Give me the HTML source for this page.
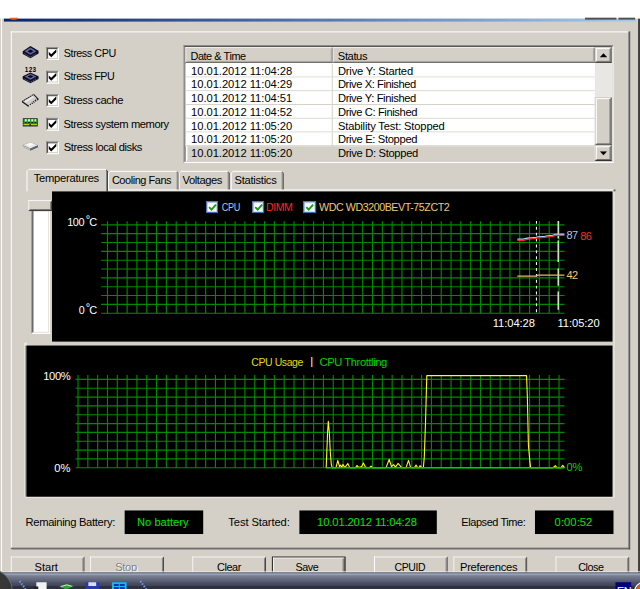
<!DOCTYPE html>
<html><head><meta charset="utf-8"><title>System Stability Test</title>
<style>
html,body{margin:0;padding:0;background:#fff;}
body{width:640px;height:589px;overflow:hidden;position:relative;}
#w{position:absolute;left:0;top:0;width:652px;height:600px;transform:scale(0.98160,0.98167);transform-origin:0 0;background:#d4d0c8;font:11.4px "Liberation Sans",sans-serif;color:#000;overflow:hidden;}
#w div,#w span,#w svg{position:absolute;box-sizing:border-box;}
.t{white-space:nowrap;line-height:13px;height:13px;}
.cb{width:13px;height:13px;background:#fff;border:1px solid;border-color:#808080 #fff #fff #808080;}
.cb i{position:absolute;left:0;top:0;width:11px;height:11px;border:1px solid;border-color:#404040 #d4d0c8 #d4d0c8 #404040;box-sizing:border-box;}
.btn{height:23px;width:75px;background:#d4d0c8;border:1px solid;border-color:#fff #404040 #404040 #fff;text-align:center;}
.btn i{position:absolute;left:0;top:0;right:0;bottom:0;border:1px solid;border-color:#d4d0c8 #808080 #808080 #d4d0c8;}
.btn b{position:absolute;left:0;right:0;top:3px;font-weight:normal;font-style:normal;line-height:13px;}
.blk{background:#000;color:#00e000;text-align:center;line-height:23px;height:23px;}
</style></head><body>
<div id="w">
<!-- frame -->
<div style="left:0;top:0;width:652px;height:18.700px;background:#fff"></div>
<div style="left:4px;top:18.600px;width:644px;height:3.400px;background:linear-gradient(90deg,#0a246a,#a6caf0)"></div>
<div style="left:596px;top:18.3px;width:32px;height:1.6px;background:#505050"></div>
<div style="left:630px;top:18.3px;width:16.500px;height:1.6px;background:#505050"></div>
<div style="left:10px;top:17.500px;width:8px;height:2.500px;border-radius:0 0 4px 4px;background:#e86020"></div>
<div style="left:1px;top:19px;width:1px;height:581px;background:#fff"></div>
<div style="left:649.9px;top:19px;width:3px;height:581px;background:#404040"></div>
<!-- group box -->
<div style="left:11px;top:32px;width:630px;height:1px;background:#fff"></div>
<div style="left:11px;top:32px;width:1px;height:527px;background:#fff"></div>
<div style="left:639.5px;top:32px;width:1px;height:527px;background:#808080"></div>
<div style="left:640.5px;top:32px;width:1px;height:528px;background:#404040"></div>
<div style="left:11px;top:558px;width:630px;height:1px;background:#404040"></div>
<div style="left:12px;top:559px;width:629px;height:1px;background:#909090"></div>
<!--SECTION:checks-->
<div style="left:23px;top:46px;width:16px;height:16px"><svg width="18" height="16" viewBox="0 0 18 16"><path d="M-0.300 6.400L8 0.800l8.300 5v2.700L8 13.300-0.300 8.700z" fill="#0e0e22"/><path d="M2 6.300L8 2.500l6 3.600L8 9.800z" fill="#6068a6"/><path d="M5 6.200L8 4.400l3 1.700L8 7.900z" fill="#07070f"/><path d="M2 8.600L8 12.200l6-3.800" stroke="#6a72ac" stroke-width="1" stroke-dasharray="1.200 1.200" fill="none"/></svg></div>
<div class="cb" style="left:47px;top:48px"><i></i><svg style="left:1px;top:1px" width="9" height="9" viewBox="0 0 9 9"><path d="M0.700 2.800v3l2.500 2.500 5.200-5.200V0.100L3.200 5.300z" fill="#000"/></svg></div>
<span class="t" style="transform:scaleX(0.963);transform-origin:0 0;letter-spacing:-0.45px;left:64.7px;top:47.7px;">Stress CPU</span>
<div style="left:23px;top:70px;width:16px;height:16px"><svg width="18" height="18" viewBox="0 0 18 18" style="margin-top:-2px"><path d="M-0.300 10L8 5.900l8.300 3.800v2.800L8 16.900-0.300 12.500z" fill="#0e0e22"/><path d="M2 10L8 7.200l6 2.700L8 13.200z" fill="#6068a6"/><path d="M5 9.900L8 8.500l3 1.400L8 11.500z" fill="#07070f"/><path d="M2 12.400L8 15.800l6-3.600" stroke="#6a72ac" stroke-width="1" stroke-dasharray="1.200 1.200" fill="none"/><text x="8.200" y="5.400" font-size="6.500" font-family="Liberation Sans,sans-serif" font-weight="bold" text-anchor="middle" fill="#000" letter-spacing="0.300">123</text></svg></div>
<div class="cb" style="left:47px;top:72px"><i></i><svg style="left:1px;top:1px" width="9" height="9" viewBox="0 0 9 9"><path d="M0.700 2.800v3l2.500 2.500 5.200-5.200V0.100L3.200 5.300z" fill="#000"/></svg></div>
<span class="t" style="transform:scaleX(0.960);transform-origin:0 0;letter-spacing:-0.45px;left:64.7px;top:71.7px;">Stress FPU</span>
<div style="left:23px;top:94px;width:16px;height:16px"><svg width="19" height="16" viewBox="0 0 19 16" style="margin-left:-1px"><path d="M0.300 8.800L12.400 1.400l4.900 5.100v1.200L6.700 14.700 0.300 10.200z" fill="#1c1c1c"/><path d="M1.500 9.300L12.100 2.900l3.400 3.500L6.900 13.100z" fill="#cfcfcf"/><path d="M3.500 9.600l8.300-4.900" stroke="#ececec" stroke-width="1.600"/><path d="M1.600 8.300L12.300 1.900" stroke="#d8d4a0" stroke-width="0.900" stroke-dasharray="1 1.300"/><path d="M7.700 13.600l8.800-6.700" stroke="#f4f4f4" stroke-width="1.700" stroke-dasharray="1 1.250"/></svg></div>
<div class="cb" style="left:47px;top:96px"><i></i><svg style="left:1px;top:1px" width="9" height="9" viewBox="0 0 9 9"><path d="M0.700 2.800v3l2.500 2.500 5.200-5.200V0.100L3.200 5.300z" fill="#000"/></svg></div>
<span class="t" style="letter-spacing:-0.43px;left:64.7px;top:95.7px;">Stress cache</span>
<div style="left:23px;top:118px;width:16px;height:16px"><svg width="18" height="16" viewBox="0 0 18 16"><rect x="0" y="2.500" width="15.400" height="8.300" fill="#061c06"/><rect x="0.800" y="3.200" width="13.800" height="5" fill="#12a012"/><path d="M2.300 3.600h1.900v2.300H2.300zM5.600 3.600h1.900v2.300H5.600zM8.900 3.600h1.900v2.300H8.900zM12.200 3.600h1.700v2.300h-1.700z" fill="#e8fce4"/><path d="M2.300 5.900h1.900v1.500H2.300zM5.600 5.900h1.900v1.500H5.600zM8.900 5.900h1.900v1.500H8.900zM12.200 5.900h1.700v1.500h-1.700z" fill="#2c1636"/><rect x="0.800" y="8.300" width="13.800" height="1.400" fill="#a8dc00"/><rect x="7" y="8.300" width="1.300" height="2" fill="#061c06"/></svg></div>
<div class="cb" style="left:47px;top:120px"><i></i><svg style="left:1px;top:1px" width="9" height="9" viewBox="0 0 9 9"><path d="M0.700 2.800v3l2.500 2.500 5.200-5.200V0.100L3.200 5.300z" fill="#000"/></svg></div>
<span class="t" style="letter-spacing:-0.43px;left:64.7px;top:119.7px;">Stress system memory</span>
<div style="left:23px;top:142px;width:16px;height:16px"><svg width="18" height="16" viewBox="0 0 18 16"><path d="M0.300 5.600L7.900 2.600l7.600 3.400v1.900L7.900 11.300 0.300 7.500z" fill="#5c5c5c"/><path d="M0.300 5.600L7.900 2.600l7.600 3.400L7.900 9.400z" fill="#e6e6e6"/><path d="M3.500 5.400L8 3.600l3.600 1.600L7.200 7z" fill="#fdfdfd"/><path d="M0.300 5.900L7.900 9.600v1.700L0.300 7.500z" fill="#c4c4c4"/><path d="M7.900 9.600l7.600-3.400v1.700L7.900 11.300z" fill="#646464"/><path d="M12.400 8l2-0.900v0.900l-2 0.900z" fill="#4a60d8"/></svg></div>
<div class="cb" style="left:47px;top:144px"><i></i><svg style="left:1px;top:1px" width="9" height="9" viewBox="0 0 9 9"><path d="M0.700 2.800v3l2.500 2.500 5.200-5.200V0.100L3.200 5.300z" fill="#000"/></svg></div>
<span class="t" style="transform:scaleX(0.996);transform-origin:0 0;letter-spacing:-0.45px;left:64.7px;top:143.7px;">Stress local disks</span>
<!--SECTION:list-->
<div style="left:187px;top:46px;width:438px;height:120px;border:1px solid;border-color:#808080 #fff #fff #808080"></div>
<div style="left:188px;top:47px;width:436px;height:118px;border:1px solid;border-color:#404040 #d4d0c8 #d4d0c8 #404040;background:#fff"></div>
<div style="left:189px;top:48px;width:150px;height:16px;background:#d4d0c8;border:1px solid;border-color:#f4f2ee #585858 #585858 #f4f2ee"><i style="position:absolute;left:0;top:0;right:0;bottom:0;border:1px solid;border-color:#d4d0c8 #aaa7a0 #aaa7a0 #d4d0c8"></i><span class="t" style="transform:scaleX(0.976);transform-origin:0 0;letter-spacing:-0.45px;left:4.2px;top:1.8px;">Date &amp; Time</span></div>
<div style="left:339px;top:48px;width:267px;height:16px;background:#d4d0c8;border:1px solid;border-color:#f4f2ee #585858 #585858 #f4f2ee"><i style="position:absolute;left:0;top:0;right:0;bottom:0;border:1px solid;border-color:#d4d0c8 #aaa7a0 #aaa7a0 #d4d0c8"></i><span class="t" style="letter-spacing:-0.42px;left:4.2px;top:1.8px;">Status</span></div>
<div style="left:189px;top:65px;width:417px;height:14px;background:#fff;border-bottom:1px solid #d4d0c8"><i style="position:absolute;left:149px;top:0;width:1px;height:14px;background:#d4d0c8"></i><span class="t" style="letter-spacing:-0.03px;left:5.6px;top:0.8px;">10.01.2012 11:04:28</span><span class="t" style="letter-spacing:-0.20px;left:155.3px;top:0.8px;">Drive Y: Started</span></div>
<div style="left:189px;top:79px;width:417px;height:14px;background:#fff;border-bottom:1px solid #d4d0c8"><i style="position:absolute;left:149px;top:0;width:1px;height:14px;background:#d4d0c8"></i><span class="t" style="letter-spacing:-0.03px;left:5.6px;top:0.8px;">10.01.2012 11:04:29</span><span class="t" style="letter-spacing:-0.43px;left:155.3px;top:0.8px;">Drive X: Finished</span></div>
<div style="left:189px;top:93px;width:417px;height:14px;background:#fff;border-bottom:1px solid #d4d0c8"><i style="position:absolute;left:149px;top:0;width:1px;height:14px;background:#d4d0c8"></i><span class="t" style="letter-spacing:-0.03px;left:5.6px;top:0.8px;">10.01.2012 11:04:51</span><span class="t" style="letter-spacing:-0.38px;left:155.3px;top:0.8px;">Drive Y: Finished</span></div>
<div style="left:189px;top:107px;width:417px;height:14px;background:#fff;border-bottom:1px solid #d4d0c8"><i style="position:absolute;left:149px;top:0;width:1px;height:14px;background:#d4d0c8"></i><span class="t" style="letter-spacing:-0.03px;left:5.6px;top:0.8px;">10.01.2012 11:04:52</span><span class="t" style="letter-spacing:-0.40px;left:155.3px;top:0.8px;">Drive C: Finished</span></div>
<div style="left:189px;top:121px;width:417px;height:14px;background:#fff;border-bottom:1px solid #d4d0c8"><i style="position:absolute;left:149px;top:0;width:1px;height:14px;background:#d4d0c8"></i><span class="t" style="letter-spacing:-0.03px;left:5.6px;top:0.8px;">10.01.2012 11:05:20</span><span class="t" style="letter-spacing:-0.17px;left:155.3px;top:0.8px;">Stability Test: Stopped</span></div>
<div style="left:189px;top:135px;width:417px;height:14px;background:#fff;border-bottom:1px solid #d4d0c8"><i style="position:absolute;left:149px;top:0;width:1px;height:14px;background:#d4d0c8"></i><span class="t" style="letter-spacing:-0.03px;left:5.6px;top:0.8px;">10.01.2012 11:05:20</span><span class="t" style="letter-spacing:-0.34px;left:155.3px;top:0.8px;">Drive E: Stopped</span></div>
<div style="left:191px;top:149px;width:415px;height:15px;background:#d4d0c8;border-bottom:1px solid #d4d0c8"><i style="position:absolute;left:147px;top:0;width:1px;height:14px;background:#d4d0c8"></i><span class="t" style="letter-spacing:-0.03px;left:3.6px;top:0.8px;">10.01.2012 11:05:20</span><span class="t" style="letter-spacing:-0.33px;left:153.3px;top:0.8px;">Drive D: Stopped</span></div>
<div style="left:606px;top:48px;width:17px;height:116px;background:#e9e7e3"></div>
<div style="left:606px;top:48px;width:17px;height:16px;background:#d4d0c8;border:1px solid;border-color:#d4d0c8 #303030 #303030 #d4d0c8"><i style="position:absolute;left:0;top:0;right:0;bottom:0;border:1px solid;border-color:#fff #707070 #707070 #fff"></i><svg style="left:3.800px;top:4.700px" width="8" height="5" viewBox="0 0 8 5"><path d="M0 4.200L3.800 0.300 7.600 4.200z" fill="#000"/></svg></div>
<div style="left:606px;top:99px;width:17px;height:49px;background:#d4d0c8;border:1px solid;border-color:#d4d0c8 #303030 #303030 #d4d0c8"><i style="position:absolute;left:0;top:0;right:0;bottom:0;border:1px solid;border-color:#fff #707070 #707070 #fff"></i></div>
<div style="left:606px;top:148px;width:17px;height:16px;background:#d4d0c8;border:1px solid;border-color:#d4d0c8 #303030 #303030 #d4d0c8"><i style="position:absolute;left:0;top:0;right:0;bottom:0;border:1px solid;border-color:#fff #707070 #707070 #fff"></i><svg style="left:3.600px;top:4.700px" width="8" height="5" viewBox="0 0 8 5"><path d="M0 0.200L3.800 4.100 7.600 0.200z" fill="#000"/></svg></div>
<!--SECTION:tabs-->
<div style="left:109px;top:193px;width:516px;height:1px;background:#fff"></div>
<div style="left:109px;top:194px;width:516px;height:1px;background:#eceae5"></div>
<div style="left:625px;top:193px;width:2px;height:2px;background:#606060"></div>
<div style="left:625px;top:195px;width:1px;height:311px;background:#f0eee9"></div>
<div style="left:110px;top:174px;width:72px;height:19px"><i style="position:absolute;left:0;top:2px;width:1px;bottom:0;background:#fff"></i><i style="position:absolute;left:1px;top:1px;width:1px;height:1px;background:#fff"></i><i style="position:absolute;left:2px;top:0;right:2px;height:1px;background:#fff"></i><i style="position:absolute;right:1px;top:1px;width:1px;height:1px;background:#404040"></i><i style="position:absolute;right:0;top:2px;width:1px;bottom:0;background:#404040"></i><i style="position:absolute;right:1px;top:2px;width:1px;bottom:0;background:#808080"></i><span class="t" style="transform:scaleX(0.978);transform-origin:0 0;letter-spacing:-0.45px;left:3.6px;top:3.4px;">Cooling Fans</span></div>
<div style="left:182px;top:174px;width:52px;height:19px"><i style="position:absolute;left:0;top:2px;width:1px;bottom:0;background:#fff"></i><i style="position:absolute;left:1px;top:1px;width:1px;height:1px;background:#fff"></i><i style="position:absolute;left:2px;top:0;right:2px;height:1px;background:#fff"></i><i style="position:absolute;right:1px;top:1px;width:1px;height:1px;background:#404040"></i><i style="position:absolute;right:0;top:2px;width:1px;bottom:0;background:#404040"></i><i style="position:absolute;right:1px;top:2px;width:1px;bottom:0;background:#808080"></i><span class="t" style="transform:scaleX(0.997);transform-origin:0 0;letter-spacing:-0.45px;left:4.2px;top:3.4px;">Voltages</span></div>
<div style="left:235px;top:174px;width:54px;height:19px"><i style="position:absolute;left:0;top:2px;width:1px;bottom:0;background:#fff"></i><i style="position:absolute;left:1px;top:1px;width:1px;height:1px;background:#fff"></i><i style="position:absolute;left:2px;top:0;right:2px;height:1px;background:#fff"></i><i style="position:absolute;right:1px;top:1px;width:1px;height:1px;background:#404040"></i><i style="position:absolute;right:0;top:2px;width:1px;bottom:0;background:#404040"></i><i style="position:absolute;right:1px;top:2px;width:1px;bottom:0;background:#808080"></i><span class="t" style="letter-spacing:-0.28px;left:3.9px;top:3.4px;">Statistics</span></div>
<div style="left:27px;top:172px;width:83px;height:23px"><i style="position:absolute;left:0;top:2px;width:1px;bottom:0;background:#fff"></i><i style="position:absolute;left:1px;top:1px;width:1px;height:1px;background:#fff"></i><i style="position:absolute;left:2px;top:0;right:2px;height:1px;background:#fff"></i><i style="position:absolute;right:1px;top:1px;width:1px;height:1px;background:#404040"></i><i style="position:absolute;right:0;top:2px;width:1px;bottom:0;background:#404040"></i><i style="position:absolute;right:1px;top:2px;width:1px;bottom:0;background:#808080"></i><span class="t" style="letter-spacing:-0.27px;left:7.4px;top:3.1px;">Temperatures</span></div>
<div style="left:32px;top:213px;width:19.200px;height:127px;background:#fff;border:1px solid;border-color:#808080 #fff #fff #707070"><i style="position:absolute;left:0;top:0;right:0;bottom:0;border:1px solid;border-color:#404040 #e4e1da #e4e1da #303030"></i></div>
<div style="left:29px;top:204px;width:24px;height:11px;background:#d4d0c8;border:1px solid;border-color:#fff #404040 #303030 #fff"><i style="position:absolute;left:0;top:0;right:0;bottom:0;border:1px solid;border-color:#d4d0c8 #808080 #707070 #d4d0c8"></i></div>
<!--SECTION:chart1-->
<div style="left:53px;top:195px;width:571px;height:153px;background:#000"></div>
<svg style="left:0;top:0" width="652" height="600" viewBox="0 0 652 600"><path d="M109.5 225.5V319.5M119.5 225.5V319.5M129.5 225.5V319.5M139.5 225.5V319.5M149.5 225.5V319.5M159.5 225.5V319.5M169.5 225.5V319.5M179.5 225.5V319.5M189.5 225.5V319.5M199.5 225.5V319.5M209.5 225.5V319.5M219.5 225.5V319.5M229.5 225.5V319.5M239.5 225.5V319.5M249.5 225.5V319.5M259.5 225.5V319.5M269.5 225.5V319.5M279.5 225.5V319.5M289.5 225.5V319.5M299.5 225.5V319.5M309.5 225.5V319.5M319.5 225.5V319.5M329.5 225.5V319.5M339.5 225.5V319.5M349.5 225.5V319.5M359.5 225.5V319.5M369.5 225.5V319.5M379.5 225.5V319.5M389.5 225.5V319.5M399.5 225.5V319.5M409.5 225.5V319.5M419.5 225.5V319.5M429.5 225.5V319.5M439.5 225.5V319.5M449.5 225.5V319.5M459.5 225.5V319.5M469.5 225.5V319.5M479.5 225.5V319.5M489.5 225.5V319.5M499.5 225.5V319.5M509.5 225.5V319.5M519.5 225.5V319.5M529.5 225.5V319.5M539.5 225.5V319.5M549.5 225.5V319.5M559.5 225.5V319.5M569.5 225.5V319.5M103 229.05H575M103 238.05H575M103 247.05H575M103 256.05H575M103 265.05H575M103 274.05H575M103 283.05H575M103 292.05H575M103 301.05H575M103 310.05H575M103 319.05H575" stroke="#008a00" stroke-width="1.150" fill="none"/><path d="M546.500 225V319" stroke="#fff" stroke-width="1.050" stroke-dasharray="3 3"/><path d="M568.700 225V243M568.700 245V267M568.700 273.500V291M568.700 297V315.500" stroke="#d0f4c8" stroke-width="1.450"/><path d="M527 243.7L533 243.7L537 242.7L541 242.2L546 241.7L548 241.2L555 240.7L558 240.2L563 239.7L566 238.7L575 238.7" stroke="#a8d0f8" stroke-width="1.300" fill="none"/><path d="M527 244.8L533 244.8L537 243.8L541 243.3L546 242.8L548 242.3L555 241.8L558 241.3L563 240.8L566 239.8L575 239.8" stroke="#ff2828" stroke-width="1.200" fill="none"/><path d="M527 281.300H546L548 280.300H575" stroke="#e8b870" stroke-width="1.400" fill="none"/></svg>
<span class="t" style="transform:scaleX(0.973);transform-origin:100% 0;letter-spacing:-0.45px;color:#fff;right:566.05px;top:220.3px;">100</span><span class="t" style="letter-spacing:-0.16px;color:#fff;left:87.4px;top:217px;">°</span><span class="t" style="transform:scaleX(0.977);transform-origin:0 0;letter-spacing:-0.45px;color:#fff;left:90.7px;top:220.3px;">C</span>
<span class="t" style="transform:scaleX(0.951);transform-origin:100% 0;letter-spacing:-0.45px;color:#fff;right:566.05px;top:310.3px;">0</span><span class="t" style="letter-spacing:-0.16px;color:#fff;left:87.4px;top:307px;">°</span><span class="t" style="transform:scaleX(0.977);transform-origin:0 0;letter-spacing:-0.45px;color:#fff;left:90.7px;top:310.3px;">C</span>
<span class="t" style="letter-spacing:-0.07px;color:#fff;left:502px;top:322.8px;">11:04:28</span>
<span class="t" style="letter-spacing:-0.09px;color:#fff;left:568px;top:322.8px;">11:05:20</span>
<span class="t" style="transform:scaleX(0.985);transform-origin:0 0;letter-spacing:-0.45px;color:#a8c8f0;left:577px;top:233.4px;">87</span>
<span class="t" style="transform:scaleX(0.985);transform-origin:0 0;letter-spacing:-0.45px;color:#ff2828;left:591.2px;top:234.2px;">86</span>
<span class="t" style="transform:scaleX(0.985);transform-origin:0 0;letter-spacing:-0.45px;color:#f0c878;left:577.4px;top:274.3px;">42</span>
<div style="left:210px;top:205px;width:12.400px;height:12.400px;background:#fff;border:1px solid #3a62b0;box-shadow:inset 0 0 0 1px #c8dcf4"><svg style="left:1px;top:1px" width="9" height="9" viewBox="0 0 9 9"><path d="M1 4L3.500 6.500 8 1.500" stroke="#10a010" stroke-width="2" fill="none"/></svg></div>
<span class="t" style="transform:scaleX(0.819);transform-origin:0 0;letter-spacing:-0.45px;color:#a8c8f0;left:225.6px;top:204.9px;">CPU</span>
<div style="left:256.5px;top:205px;width:12.400px;height:12.400px;background:#fff;border:1px solid #3a62b0;box-shadow:inset 0 0 0 1px #c8dcf4"><svg style="left:1px;top:1px" width="9" height="9" viewBox="0 0 9 9"><path d="M1 4L3.500 6.500 8 1.500" stroke="#10a010" stroke-width="2" fill="none"/></svg></div>
<span class="t" style="transform:scaleX(0.944);transform-origin:0 0;letter-spacing:-0.45px;color:#ff2828;left:271.2px;top:204.9px;">DIMM</span>
<div style="left:309.3px;top:205px;width:12.400px;height:12.400px;background:#fff;border:1px solid #3a62b0;box-shadow:inset 0 0 0 1px #c8dcf4"><svg style="left:1px;top:1px" width="9" height="9" viewBox="0 0 9 9"><path d="M1 4L3.500 6.500 8 1.500" stroke="#10a010" stroke-width="2" fill="none"/></svg></div>
<span class="t" style="transform:scaleX(0.953);transform-origin:0 0;letter-spacing:-0.45px;color:#f0c878;left:324.7px;top:204.9px;">WDC WD3200BEVT-75ZCT2</span>
<!--SECTION:chart2-->
<div style="left:25px;top:349px;width:2px;height:157px;background:#f4f2ee"></div>
<div style="left:26px;top:352px;width:1px;height:154px;background:#505050"></div>
<div style="left:26px;top:506px;width:600px;height:1px;background:#f0eee9"></div>
<div style="left:27px;top:352px;width:597px;height:154px;background:#000"></div>
<svg style="left:0;top:0" width="652" height="600" viewBox="0 0 652 600"><path d="M79.5 382V477M89.5 382V477M99.5 382V477M109.5 382V477M119.5 382V477M129.5 382V477M139.5 382V477M149.5 382V477M159.5 382V477M169.5 382V477M179.5 382V477M189.5 382V477M199.5 382V477M209.5 382V477M219.5 382V477M229.5 382V477M239.5 382V477M249.5 382V477M259.5 382V477M269.5 382V477M279.5 382V477M289.5 382V477M299.5 382V477M309.5 382V477M319.5 382V477M329.5 382V477M339.5 382V477M349.5 382V477M359.5 382V477M369.5 382V477M379.5 382V477M389.5 382V477M399.5 382V477M409.5 382V477M419.5 382V477M429.5 382V477M439.5 382V477M449.5 382V477M459.5 382V477M469.5 382V477M479.5 382V477M489.5 382V477M499.5 382V477M509.5 382V477M519.5 382V477M529.5 382V477M539.5 382V477M549.5 382V477M559.5 382V477M569.5 382V477M77 386.50H575M77 395.50H575M77 404.50H575M77 413.50H575M77 422.50H575M77 431.50H575M77 440.50H575M77 449.50H575M77 458.50H575M77 467.50H575M77 476.50H575" stroke="#008a00" stroke-width="1.150" fill="none"/><g transform="scale(1.01875)"><path d="M326.2 468.1L326.6 457.3L327.6 432L328.3 421.2L329.3 432.3L330.3 452.2L331.3 464.4L332.2 467.6L336 467.6L337.8 460.4L339.5 466.6L340.5 465L341.8 467.1L343 464.5L344.5 467.1L346 466.1L347.8 463.4L349.5 467.1L350.5 467.6L355.5 467.6L357 465.4L358.5 467.4L361.5 466.6L363.4 463L365.5 467.1L367 467.6L369.5 467.6L371 466.1L372.5 467.6L386 467.6L389.2 459.4L391.5 466.6L393.6 464.6L395.5 467.1L398 463.4L400 465.6L401.5 467.6L406 467.6L408.5 460.4L410.5 467.1L411.5 467.6L414.5 467.6L416 465L417.5 467.6L419 467.6L420 465.6L421.5 467.6L423.4 467.6L424.3 456.6L424.8 442.5L425.6 420L426.2 397L426.8 375.6L526.5 375.6L527.3 395L528.4 445L529.8 460.6L530.6 467.6L553 467.6L555.3 465.6L557 467.6L561 467.6L562.8 465.4L564.4 467.6" stroke="#fcfc18" stroke-width="1.100" fill="none" stroke-linejoin="round"/></g><path d="M332.500 476.500H575" stroke="#00d000" stroke-width="1.600" fill="none"/></svg>
<span class="t" style="transform:scaleX(0.937);transform-origin:0 0;letter-spacing:-0.45px;color:#e0dc00;left:256.2px;top:362.6px;">CPU Usage</span>
<span class="t" style="color:#fff;left:316.2px;top:362.1px;">|</span>
<span class="t" style="letter-spacing:-0.42px;color:#00d400;left:325.5px;top:362.6px;">CPU Throttling</span>
<span class="t" style="letter-spacing:-0.34px;color:#fff;left:44px;top:376.8px;">100%</span>
<span class="t" style="letter-spacing:-0.09px;color:#fff;left:55.4px;top:471.1px;">0%</span>
<span class="t" style="letter-spacing:0.01px;color:#00d400;left:577px;top:470.4px;">0%</span>
<!--SECTION:status-->
<span class="t" style="letter-spacing:-0.32px;left:26px;top:525.8px;">Remaining Battery:</span>
<div class="blk" style="left:127px;top:520px;width:80px;height:24px"></div>
<span class="t" style="letter-spacing:-0.01px;color:#00e800;left:139.6px;top:525.8px;">No battery</span>
<span class="t" style="letter-spacing:-0.11px;left:232.6px;top:525.8px;">Test Started:</span>
<div class="blk" style="left:305px;top:520px;width:140px;height:24px"></div>
<span class="t" style="letter-spacing:-0.11px;color:#00e800;left:323px;top:525.8px;">10.01.2012 11:04:28</span>
<span class="t" style="transform:scaleX(0.982);transform-origin:0 0;letter-spacing:-0.45px;left:470px;top:525.8px;">Elapsed Time:</span>
<div class="blk" style="left:545px;top:520px;width:80px;height:24px"></div>
<span class="t" style="letter-spacing:0.07px;color:#00e800;left:565px;top:525.8px;">0:00:52</span>
<!--SECTION:buttons-->
<div class="btn" style="left:11px;top:567px"><i></i></div><span class="t" style="letter-spacing:-0.05px;left:35.2px;top:571.6px;">Start</span>
<div class="btn" style="left:92px;top:567px"><i></i></div><span class="t" style="letter-spacing:-0.36px;color:#fff;left:118.4px;top:572.6px;">Stop</span><span class="t" style="letter-spacing:-0.36px;color:#808080;left:117.4px;top:571.6px;">Stop</span>
<div class="btn" style="left:196px;top:567px"><i></i></div><span class="t" style="transform:scaleX(0.976);transform-origin:0 0;letter-spacing:-0.45px;left:220.5px;top:571.6px;">Clear</span>
<div style="left:277px;top:567px;width:75px;height:23px;background:#000"></div><div class="btn" style="left:278px;top:568px;width:73px;height:21px"><i></i></div><span class="t" style="transform:scaleX(0.963);transform-origin:0 0;letter-spacing:-0.45px;left:301.3px;top:571.6px;">Save</span>
<div class="btn" style="left:381px;top:567px"><i></i></div><span class="t" style="transform:scaleX(0.933);transform-origin:0 0;letter-spacing:-0.45px;left:402.4px;top:571.6px;">CPUID</span>
<div class="btn" style="left:462px;top:567px"><i></i></div><span class="t" style="letter-spacing:-0.27px;left:468.6px;top:571.6px;">Preferences</span>
<div class="btn" style="left:566px;top:567px"><i></i></div><span class="t" style="transform:scaleX(0.963);transform-origin:0 0;letter-spacing:-0.45px;left:589.1px;top:571.6px;">Close</span>
<!--SECTION:taskbar-->
<div style="left:0;top:581.700px;width:652px;height:1.100px;background:#ece8dc"></div>
<div style="left:0;top:582.700px;width:652px;height:18px;background:#5c6474"></div>
<div style="left:0;top:583.700px;width:652px;height:17px;background:linear-gradient(180deg,#98a0b8 0,#98a0b8 2px,#7c8094 2.300px,#60657a 7px,#484c60 10.500px,#404458 13px,#2e3040 13.300px,#2e3040 17px)"></div>
<div style="left:-33px;top:580.300px;width:45.400px;height:45.400px;border-radius:23px;background:radial-gradient(circle,#3c3c3c 0,#343434 80%,#101010 92%,#0a0a0a 100%);box-shadow:0 0 0 1px #6a7084"></div>
<svg style="left:0;top:582px" width="652" height="18" viewBox="0 0 652 18"><path d="M20 10l6 8" stroke="#6fa0e8" stroke-width="2" stroke-dasharray="1.500 1.500"/><path d="M37 11h10.500v7H37z" fill="#f2f2f2"/><path d="M34.500 15.500h4.500v3h-4.500z" fill="#222"/><path d="M60 15.500l8-2.500 7.500 2-8 3.500z" fill="#30a030"/><path d="M62 15.500l6-1.700 5 1.400" stroke="#d0e8d0" fill="none"/><path d="M87 11h14v7h-14z" fill="#2838b0"/><path d="M90 11h8v4h-8z" fill="#d8dcf0"/><path d="M114 11h15v7h-15z" fill="#18b8f0"/><path d="M116 13h5v2h-5zM122 13h5v2h-5zM116 16h5v2h-5zM122 16h5v2h-5z" fill="#1030c0"/><path d="M143 10l6 8" stroke="#6fa0e8" stroke-width="2" stroke-dasharray="1.500 1.500"/><path d="M627 11.200h16v7h-16z" fill="#000080"/><circle cx="656.500" cy="21" r="9" fill="#e05818"/><circle cx="656.500" cy="21" r="10" fill="none" stroke="#f0f0f0" stroke-width="1.300"/></svg>
<span class="t" style="left:628.500px;top:595.600px;color:#fff;font-size:11px;letter-spacing:-0.300px">EN</span>
</div>
</body></html>
